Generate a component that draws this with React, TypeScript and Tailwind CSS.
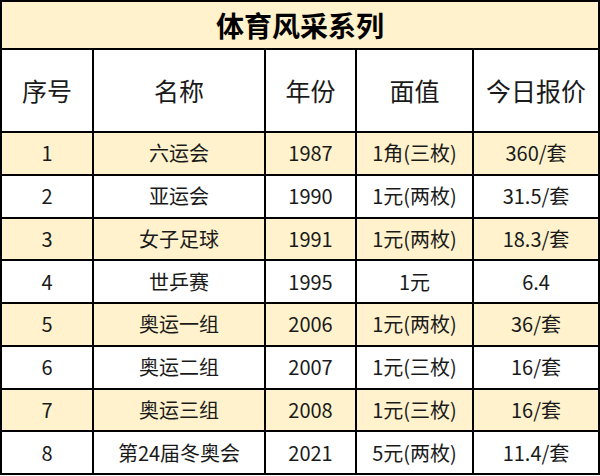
const rows = [
  ["1", "六运会", "1987", "1角(三枚)", "360/套"],
  ["2", "亚运会", "1990", "1元(两枚)", "31.5/套"],
  ["3", "女子足球", "1991", "1元(两枚)", "18.3/套"],
  ["4", "世乒赛", "1995", "1元", "6.4"],
  ["5", "奥运一组", "2006", "1元(两枚)", "36/套"],
  ["6", "奥运二组", "2007", "1元(三枚)", "16/套"],
  ["7", "奥运三组", "2008", "1元(三枚)", "16/套"],
  ["8", "第24届冬奥会", "2021", "5元(两枚)", "11.4/套"],
]

const headers = ["序号", "名称", "年份", "面值", "今日报价"]

export default function App() {
  return (
    <div className="w-[600px] h-[476px] bg-white font-['Noto_Sans_CJK_SC',sans-serif] text-[#1a1a1a]">
      <table className="w-[598px] border-collapse table-fixed">
        <colgroup>
          <col className="w-[92px]" />
          <col className="w-[172px]" />
          <col className="w-[91px]" />
          <col className="w-[117px]" />
          <col className="w-[126px]" />
        </colgroup>
        <thead>
          <tr className="h-[48px] bg-[#fff2cc]">
            <th
              colSpan={5}
              className="border-2 border-black text-[28px] font-bold leading-none text-black"
            >
              体育风采系列
            </th>
          </tr>
          <tr className="h-[83px] bg-white">
            {headers.map((h) => (
              <th
                key={h}
                className="border-2 border-black text-[25px] font-normal leading-none"
              >
                {h}
              </th>
            ))}
          </tr>
        </thead>
        <tbody>
          {rows.map((r, i) => (
            <tr
              key={r[0]}
              className={i % 2 === 0 ? "h-[42.75px] bg-[#fff2cc]" : "h-[42.75px] bg-white"}
            >
              {r.map((c, j) => (
                <td
                  key={j}
                  className="border-2 border-black text-center text-[20px] leading-none"
                >
                  {c}
                </td>
              ))}
            </tr>
          ))}
        </tbody>
      </table>
    </div>
  )
}
